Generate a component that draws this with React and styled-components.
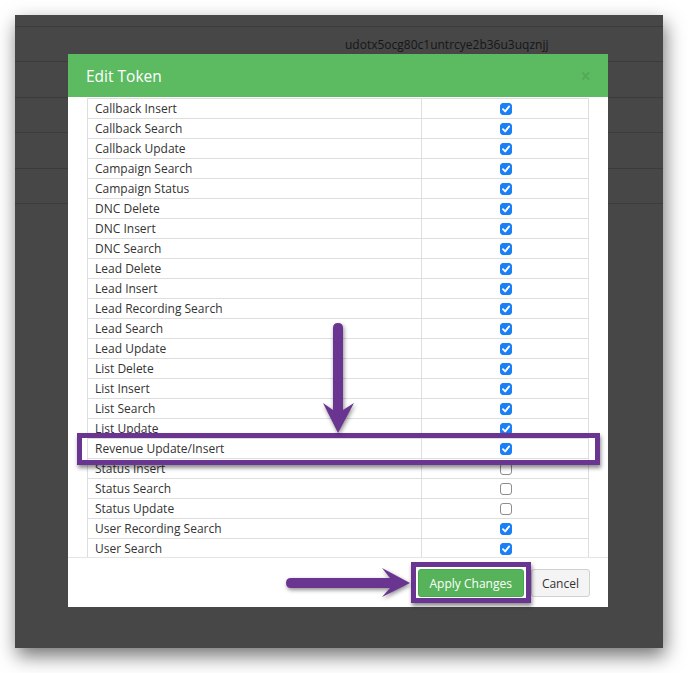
import React from "react";
import styled, { createGlobalStyle } from "styled-components";

const GlobalStyle = createGlobalStyle`
  html, body {
    margin: 0;
    padding: 0;
    background: #ffffff;
    font-family: "Open Sans", "Liberation Sans", sans-serif;
  }
`;

const Page = styled.div`
  width: 688px;
  height: 673px;
  padding: 15px 25px 25px 15px;
  box-sizing: border-box;
`;

const Screen = styled.div`
  position: relative;
  width: 648px;
  height: 633px;
  background: #474747;
  box-shadow: 2px 8px 18px rgba(0, 0, 0, 0.55);
  overflow: hidden;
  display: flex;
  flex-direction: column;
`;

const BgRow = styled.div`
  height: ${(p) => p.h}px;
  flex-shrink: 0;
  border-bottom: 1px solid #3b3b3b;
  box-sizing: border-box;
  display: flex;
  align-items: center;
  padding-left: 330px;
  font-size: 12px;
  color: #161616;
`;

const Modal = styled.div`
  position: absolute;
  left: 53px;
  top: 39px;
  width: 540px;
  height: 553px;
  background: #fff;
  display: flex;
  flex-direction: column;
`;

const Header = styled.div`
  height: 43px;
  flex-shrink: 0;
  background: #5cbb61;
  display: flex;
  align-items: center;
  justify-content: space-between;
  padding: 0 17px 0 18px;
  color: #fff;
  font-size: 15.5px;
`;

const Close = styled.span`
  font-size: 19px;
  font-weight: 700;
  color: rgba(0, 0, 0, 0.1);
  line-height: 1;
  margin-top: 2px;
`;

const Body = styled.div`
  height: 460px;
  flex-shrink: 0;
  overflow: hidden;
  padding: 1px 19px 0 19px;
  box-sizing: border-box;
`;

const Table = styled.table`
  width: 502px;
  border-collapse: collapse;
  font-size: 12px;
  color: #333;
`;

const Cell = styled.td`
  height: 19px;
  padding: 0 7px;
  border: 1px solid #dedede;
  line-height: 19px;
  width: ${(p) => (p.wide ? "319px" : "auto")};
  text-align: ${(p) => (p.center ? "center" : "left")};
  vertical-align: middle;
`;

const Box = styled.span`
  display: inline-block;
  width: 12px;
  height: 12px;
  box-sizing: border-box;
  border-radius: 3px;
  vertical-align: middle;
  margin-top: -2px;
  margin-left: 1px;
  background: ${(p) => (p.on ? "#1b7ff5" : "#fff")};
  border: 1px solid ${(p) => (p.on ? "#1b7ff5" : "#8d8d8d")};
  svg {
    display: block;
  }
`;

const Footer = styled.div`
  flex: 1;
  border-top: 1px solid #e5e5e5;
  display: flex;
  justify-content: flex-end;
  align-items: flex-start;
  gap: 7px;
  padding: 11px 18px 0 0;
`;

const Button = styled.button`
  height: 28px;
  padding: 0 ${(p) => (p.primary ? "11px" : "10px")};
  border-radius: 3px;
  font-family: "Open Sans", "Liberation Sans", sans-serif;
  font-size: 12px;
  border: 1px solid ${(p) => (p.primary ? "#48a84c" : "#d0d0d0")};
  background: ${(p) => (p.primary ? "#56b35a" : "#f4f4f4")};
  color: ${(p) => (p.primary ? "#fff" : "#333")};
`;

const Frame = styled.div`
  position: absolute;
  left: ${(p) => p.x}px;
  top: ${(p) => p.y}px;
  width: ${(p) => p.w}px;
  height: ${(p) => p.h}px;
  box-sizing: border-box;
  border: 5px solid #6a3591;
  box-shadow: 1px 3px 4px rgba(0, 0, 0, 0.45);
`;

const Arrow = styled.svg`
  position: absolute;
  left: ${(p) => p.x}px;
  top: ${(p) => p.y}px;
  overflow: visible;
  filter: drop-shadow(1px 2px 2px rgba(0, 0, 0, 0.45));
`;

const rows = [
  ["Callback Insert", true],
  ["Callback Search", true],
  ["Callback Update", true],
  ["Campaign Search", true],
  ["Campaign Status", true],
  ["DNC Delete", true],
  ["DNC Insert", true],
  ["DNC Search", true],
  ["Lead Delete", true],
  ["Lead Insert", true],
  ["Lead Recording Search", true],
  ["Lead Search", true],
  ["Lead Update", true],
  ["List Delete", true],
  ["List Insert", true],
  ["List Search", true],
  ["List Update", true],
  ["Revenue Update/Insert", true],
  ["Status Insert", false],
  ["Status Search", false],
  ["Status Update", false],
  ["User Recording Search", true],
  ["User Search", true],
];

const Check = ({ on }) => (
  <Box on={on}>
    {on && (
      <svg width="10" height="10" viewBox="0 0 10 10">
        <path
          d="M2 5.2 L4.2 7.4 L8 2.6"
          fill="none"
          stroke="#fff"
          strokeWidth="1.9"
          strokeLinecap="round"
          strokeLinejoin="round"
        />
      </svg>
    )}
  </Box>
);

const App = () => {
  return (
    <Page>
      <GlobalStyle />
      <Screen>
        <BgRow h={12} />
        <BgRow h={35}>udotx5ocg80c1untrcye2b36u3uqznjj</BgRow>
        <BgRow h={36} />
        <BgRow h={35} />
        <BgRow h={36} />
        <BgRow h={35} />

        <Modal>
          <Header>
            <span>Edit Token</span>
            <Close>×</Close>
          </Header>
          <Body>
            <Table>
              <tbody>
                {rows.map(([name, on]) => (
                  <tr key={name}>
                    <Cell wide>{name}</Cell>
                    <Cell center>
                      <Check on={on} />
                    </Cell>
                  </tr>
                ))}
              </tbody>
            </Table>
          </Body>
          <Footer>
            <Button primary>Apply Changes</Button>
            <Button>Cancel</Button>
          </Footer>
        </Modal>

        <Frame x={62} y={418} w={523} h={32} />
        <Frame x={396} y={547} w={120} h={41} />

        {/* down arrow */}
        <Arrow x={308} y={307} width="32" height="112" viewBox="0 0 32 112">
          <path
            d="M10 6 Q10 1 15 1 Q20 1 20 6 L20 88 L31 81 L15 111 L0 81 L10 88 Z"
            fill="#6a3591"
          />
        </Arrow>

        {/* right arrow */}
        <Arrow x={270} y={553} width="126" height="30" viewBox="0 0 126 30">
          <path
            d="M6 10 L105 10 L97 0 L125 15 L97 29 L105 20 L6 20 Q1 20 1 15 Q1 10 6 10 Z"
            fill="#6a3591"
          />
        </Arrow>
      </Screen>
    </Page>
  );
};

export default App;
